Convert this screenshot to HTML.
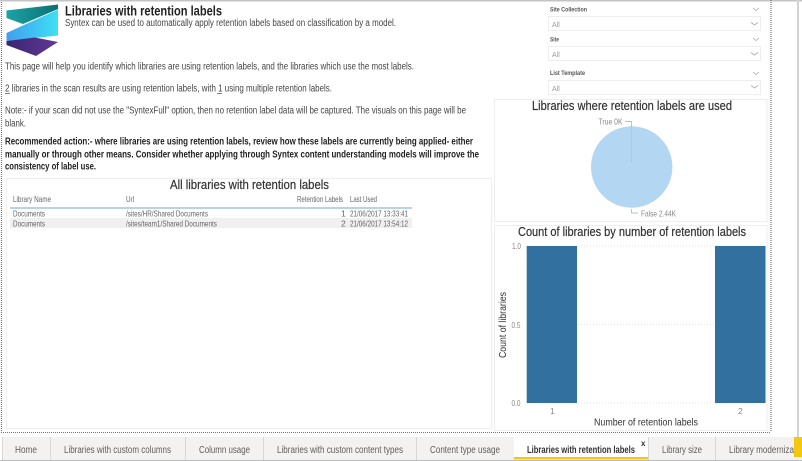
<!DOCTYPE html>
<html><head><meta charset="utf-8"><style>
html,body{margin:0;padding:0;background:#fff;width:802px;height:461px;overflow:hidden}
svg{display:block;filter:blur(.3px)}
text{font-family:"Liberation Sans",sans-serif;font-size:10px;fill:#444}
.b{fill:#222;font-weight:bold}
.t{fill:#333;font-size:12.500px;stroke:#333;stroke-width:.2px}
.s{fill:#666;font-size:8.500px}
.a{fill:#888;font-size:8.500px}
.l{font-size:6.500px;fill:#555;font-weight:bold}
.tb{fill:#605e5c;font-size:10px}
</style></head><body>
<svg width="802" height="461" viewBox="0 0 802 461" xmlns="http://www.w3.org/2000/svg">
<defs>
<linearGradient id="g1" x1="0" y1="0" x2="1" y2="0"><stop offset="0" stop-color="#1ca3a6"/><stop offset="1" stop-color="#0c6f73"/></linearGradient>
<linearGradient id="g2" x1="0" y1="0" x2="1" y2="0"><stop offset="0" stop-color="#3f9fef"/><stop offset="1" stop-color="#3fe0f2"/></linearGradient>
<linearGradient id="g3" x1="0" y1="0" x2="1" y2="0"><stop offset="0" stop-color="#3c2470"/><stop offset="1" stop-color="#5f3a96"/></linearGradient>
</defs>
<rect x="0" y="0" width="802" height="1.500" fill="#c4c4c4"/>
<rect x="797" y="0" width="2" height="437" fill="#d4d4d4"/>
<line x1="1.500" y1="2" x2="1.500" y2="432" stroke="#777" stroke-width="1.200" stroke-dasharray="1 1"/>
<line x1="771" y1="0" x2="771" y2="432" stroke="#777" stroke-width="1.200" stroke-dasharray="1 1"/>
<line x1="1" y1="432.500" x2="771" y2="432.500" stroke="#777" stroke-width="1" stroke-dasharray="1 1"/>

<polygon points="6.500,10.500 58,4.500 58,9 23,24 6.500,18" fill="url(#g1)"/>
<polygon points="6.500,33 58,9.500 58,35.500 6.500,41" fill="url(#g2)"/>
<polygon points="6.500,41 35,37.500 58,42 36,56 6.500,45" fill="url(#g3)"/>

<text x="65" y="15.500" class="b" style="font-size:14px" textLength="157" lengthAdjust="spacingAndGlyphs">Libraries with retention labels</text>
<text x="65" y="26" textLength="331" lengthAdjust="spacingAndGlyphs">Syntex can be used to automatically apply retention labels based on classification by a model.</text>
<text x="5" y="69.500" textLength="409" lengthAdjust="spacingAndGlyphs">This page will help you identify which libraries are using retention labels, and the libraries which use the most labels.</text>
<text x="5" y="91.500" textLength="327" lengthAdjust="spacingAndGlyphs">2 libraries in the scan results are using retention labels, with 1 using multiple retention labels.</text>
<line x1="5" y1="93.500" x2="10" y2="93.500" stroke="#4a90d0" stroke-width="1"/>
<line x1="217" y1="93.500" x2="222" y2="93.500" stroke="#4a90d0" stroke-width="1"/>
<text x="5" y="113.500" textLength="461" lengthAdjust="spacingAndGlyphs">Note:- if your scan did not use the "SyntexFull" option, then no retention label data will be captured. The visuals on this page will be</text>
<text x="5" y="126.500" textLength="21" lengthAdjust="spacingAndGlyphs">blank.</text>
<text x="5" y="144.500" class="b" textLength="468" lengthAdjust="spacingAndGlyphs">Recommended action:- where libraries are using retention labels, review how these labels are currently being applied- either</text>
<text x="5" y="157.500" class="b" textLength="474" lengthAdjust="spacingAndGlyphs">manually or through other means. Consider whether applying through Syntex content understanding models will improve the</text>
<text x="5" y="169.500" class="b" textLength="91" lengthAdjust="spacingAndGlyphs">consistency of label use.</text>

<text x="550" y="11.500" class="l" textLength="37" lengthAdjust="spacingAndGlyphs">Site Collection</text>
<text x="550" y="41.500" class="l" textLength="9" lengthAdjust="spacingAndGlyphs">Site</text>
<text x="550" y="75" class="l" textLength="35" lengthAdjust="spacingAndGlyphs">List Template</text>
<rect x="548.500" y="16.500" width="212" height="14" fill="#fff" stroke="#eee"/>
<rect x="548.500" y="46.500" width="212" height="14" fill="#fff" stroke="#eee"/>
<rect x="548.500" y="80.500" width="212" height="14" fill="#fff" stroke="#eee"/>
<text x="552" y="27" class="s" style="font-size:7px;fill:#999">All</text>
<text x="552" y="57" class="s" style="font-size:7px;fill:#999">All</text>
<text x="552" y="91" class="s" style="font-size:7px;fill:#999">All</text>
<g fill="none" stroke="#aaa" stroke-width=".8">
<path d="M753 8l3 2.500 3-2.500M751 22.500l3.500 2.500 3.500-2.500M753 38l3 2.500 3-2.500M751 52.500l3.500 2.500 3.500-2.500M753 72l3 2.500 3-2.500M751 85.500l3.500 2.500 3.500-2.500"/>
</g>

<rect x="494.500" y="99.500" width="272.500" height="122" fill="#fff" stroke="#eee"/>
<rect x="494.500" y="225.500" width="272.500" height="205" fill="#fff" stroke="#eee"/>
<rect x="6.500" y="178.500" width="485" height="250" fill="#fff" stroke="#eee"/>

<text x="170" y="189" class="t" textLength="159" lengthAdjust="spacingAndGlyphs">All libraries with retention labels</text>
<text x="13" y="202" class="s" textLength="38" lengthAdjust="spacingAndGlyphs">Library Name</text>
<text x="126" y="202" class="s" textLength="8" lengthAdjust="spacingAndGlyphs">Url</text>
<text x="297" y="202" class="s" textLength="46" lengthAdjust="spacingAndGlyphs">Retention Labels</text>
<text x="350" y="202" class="s" textLength="27" lengthAdjust="spacingAndGlyphs">Last Used</text>
<rect x="10" y="207" width="402" height="2" fill="#b9d2e6"/>
<rect x="10" y="218" width="402" height="10" fill="#f0f0f0"/>
<text x="13" y="216.500" class="s" textLength="32" lengthAdjust="spacingAndGlyphs">Documents</text>
<text x="126" y="216.500" class="s" textLength="82" lengthAdjust="spacingAndGlyphs">/sites/HR/Shared Documents</text>
<text x="341" y="216.500" class="s">1</text>
<text x="350" y="216.500" class="s" textLength="58" lengthAdjust="spacingAndGlyphs">21/06/2017 13:33:41</text>
<text x="13" y="226.500" class="s" textLength="32" lengthAdjust="spacingAndGlyphs">Documents</text>
<text x="126" y="226.500" class="s" textLength="91" lengthAdjust="spacingAndGlyphs">/sites/team1/Shared Documents</text>
<text x="341" y="226.500" class="s">2</text>
<text x="350" y="226.500" class="s" textLength="58" lengthAdjust="spacingAndGlyphs">21/06/2017 13:54:12</text>

<text x="532" y="110" class="t" textLength="200" lengthAdjust="spacingAndGlyphs">Libraries where retention labels are used</text>
<circle cx="631.700" cy="167" r="40.700" fill="#b3d7f2"/>
<line x1="631.700" y1="126.500" x2="631.700" y2="162" stroke="#9fc3de" stroke-width=".6"/>
<path d="M625 121.500H631.500V127" fill="none" stroke="#aaa" stroke-width=".7"/>
<text x="598.500" y="124.500" class="a" textLength="24" lengthAdjust="spacingAndGlyphs">True 0K</text>
<path d="M631.500 209V213H638" fill="none" stroke="#aaa" stroke-width=".7"/>
<text x="641" y="216.500" class="a" textLength="35" lengthAdjust="spacingAndGlyphs">False 2.44K</text>

<text x="518" y="236" class="t" textLength="228" lengthAdjust="spacingAndGlyphs">Count of libraries by number of retention labels</text>
<g stroke="#ddd" stroke-width=".8" stroke-dasharray="1 2">
<line x1="527" y1="246" x2="765" y2="246"/>
<line x1="527" y1="324.700" x2="765" y2="324.700"/>
<line x1="527" y1="403" x2="765" y2="403"/>
</g>
<rect x="526.700" y="246" width="50.300" height="157" fill="#31709f"/>
<rect x="715" y="246" width="50.500" height="157" fill="#31709f"/>
<text x="512" y="249" class="a" textLength="9" lengthAdjust="spacingAndGlyphs">1.0</text>
<text x="511.500" y="328" class="a" textLength="9" lengthAdjust="spacingAndGlyphs">0.5</text>
<text x="511.500" y="406" class="a" textLength="9" lengthAdjust="spacingAndGlyphs">0.0</text>
<text x="550" y="414" class="a">1</text>
<text x="738" y="414" class="a">2</text>
<text x="594" y="425.500" style="font-size:10px;fill:#333" textLength="104" lengthAdjust="spacingAndGlyphs">Number of retention labels</text>
<text transform="translate(506,358) rotate(-90)" style="font-size:10px;fill:#333" textLength="66" lengthAdjust="spacingAndGlyphs">Count of libraries</text>

<rect x="2" y="437" width="800" height="23" fill="#f3f2f1"/>
<rect x="514" y="437" width="134" height="23" fill="#fff"/>
<rect x="514" y="457" width="134" height="2.500" fill="#f2c811"/>
<rect x="794" y="437" width="8" height="20" fill="#f2c811"/>
<rect x="0" y="460" width="802" height="1" fill="#bbb"/>
<g stroke="#d8d8d8" stroke-width="1">
<line x1="2.500" y1="437" x2="2.500" y2="460"/>
<line x1="50.500" y1="437" x2="50.500" y2="460"/>
<line x1="185.500" y1="437" x2="185.500" y2="460"/>
<line x1="263.500" y1="437" x2="263.500" y2="460"/>
<line x1="416.500" y1="437" x2="416.500" y2="460"/>
<line x1="648.500" y1="437" x2="648.500" y2="460"/>
<line x1="715.500" y1="437" x2="715.500" y2="460"/>
</g>
<text x="15" y="453" class="tb" textLength="22" lengthAdjust="spacingAndGlyphs">Home</text>
<text x="64" y="453" class="tb" textLength="107" lengthAdjust="spacingAndGlyphs">Libraries with custom columns</text>
<text x="199" y="453" class="tb" textLength="51" lengthAdjust="spacingAndGlyphs">Column usage</text>
<text x="277" y="453" class="tb" textLength="126" lengthAdjust="spacingAndGlyphs">Libraries with custom content types</text>
<text x="430" y="453" class="tb" textLength="70" lengthAdjust="spacingAndGlyphs">Content type usage</text>
<text x="527" y="453" class="tb" style="fill:#333;font-weight:bold" textLength="108" lengthAdjust="spacingAndGlyphs">Libraries with retention labels</text>
<text x="641" y="446" style="font-size:8px;fill:#333;font-weight:bold">x</text>
<text x="662" y="453" class="tb" textLength="40" lengthAdjust="spacingAndGlyphs">Library size</text>
<text x="729" y="453" class="tb" textLength="65" lengthAdjust="spacingAndGlyphs">Library moderniza</text>
</svg>
</body></html>
